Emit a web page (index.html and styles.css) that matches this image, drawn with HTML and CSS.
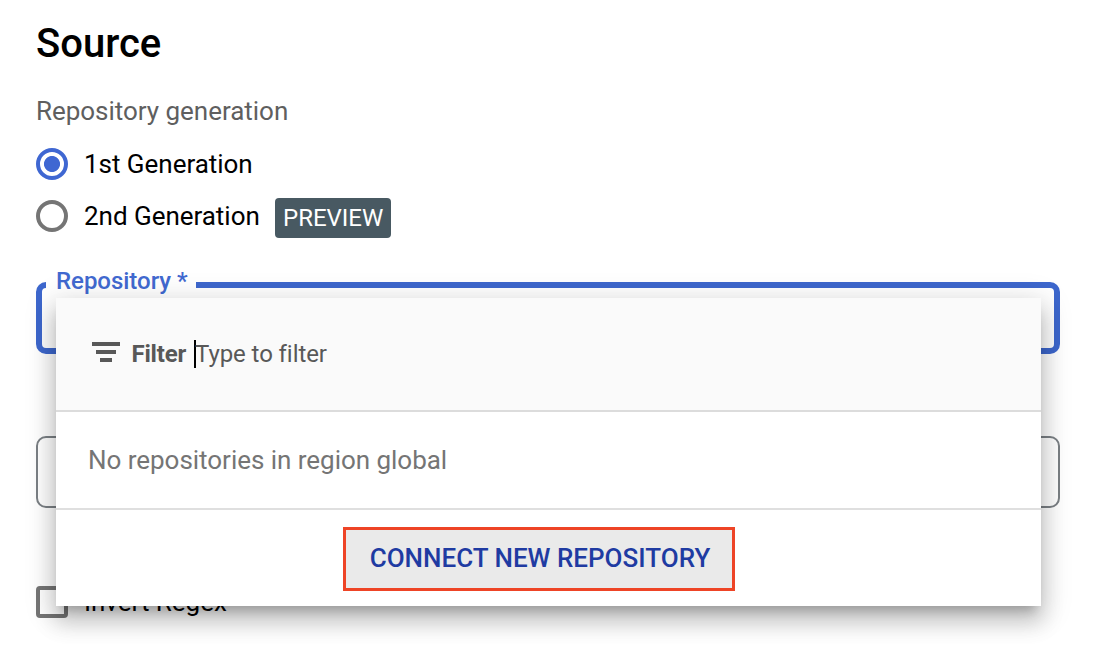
FILE: index.html
```html
<!DOCTYPE html>
<html lang="en">
<head>
<meta charset="utf-8">
<title>Source</title>
<link rel="stylesheet" href="styles.css">
</head>
<body>
<main class="form">
  <h2 class="title">Source</h2>
  <div class="group-label"><span>Repository generation</span></div>
  <div class="option"><span class="radio radio-on"></span><span class="option-text">1st Generation</span></div>
  <div class="option"><span class="radio"></span><span class="option-text">2nd Generation</span><span class="badge"><span>PREVIEW</span></span></div>
  <div class="field field-active">
    <span class="field-label"><span class="field-label-text">Repository *</span></span>
    <div class="menu">
      <div class="filter">
        <svg class="filter-icon" width="28" height="20" viewBox="0 0 28 20"><path d="M0 0h28v4H0zM4 8h20v4H4zM8 16h12v4H8z" fill="#585858"/></svg>
        <b class="filter-name">Filter</b>
        <span class="caret"></span>
        <span class="filter-hint">Type to filter</span>
      </div>
      <div class="empty"><span>No repositories in region global</span></div>
      <div class="actions"><button class="connect"><span>CONNECT NEW REPOSITORY</span></button></div>
    </div>
  </div>
  <div class="field"></div>
  <div class="check"><span class="checkbox"></span><span class="check-text">Invert Regex</span></div>
</main>
</body>
</html>
```
FILE: styles.css
```css
* { box-sizing: border-box; }
body { margin: 0; background: #fff; color: #000; font-family: Roboto, sans-serif; font-size: 26px; line-height: 32px; letter-spacing: -0.03px; overflow: hidden; }
.form { width: 1100px; height: 650px; padding: 20px 40px 0 36px; white-space: nowrap; }
.title { margin: 0; font-size: 40px; line-height: 48px; font-weight: 500; letter-spacing: 0; }
.group-label { margin: 27px 0 21px; color: #5f5f5f; }
.option { display: flex; align-items: center; height: 32px; margin-bottom: 20px; }
.radio { width: 32px; height: 32px; border: 4px solid #757575; border-radius: 50%; margin-right: 16px; }
.radio-on { border-color: #3f67d2; background: radial-gradient(circle, #3f67d2 7.6px, transparent 8.4px); }
.badge { display: flex; align-items: center; justify-content: center; width: 116px; height: 40px; margin: 4px 0 0 auto; border-radius: 4px; background: #485962; color: #fff; font-size: 24px; }
.option .badge { margin-left: 15.4px; }
.field { position: relative; height: 72px; border: 2px solid #7b8085; border-radius: 10px; }
.field-active { margin: 50px 0 82px; border: 6px solid #3d67cd; }
.field-label { position: absolute; left: 4px; top: -21px; width: 150px; height: 28px; padding-left: 10px; background: #fff; color: #4169d0; font-size: 24px; line-height: 28px; font-weight: 500; }
.menu { position: absolute; z-index: 2; left: 14px; top: 10px; width: 985px; height: 308px; background: #fff; box-shadow: 0 10px 10px -6px rgba(0,0,0,.21), 0 16px 20px 2px rgba(0,0,0,.15), 0 6px 28px 4px rgba(0,0,0,.14); }
.filter { display: flex; align-items: center; height: 114px; padding: 0 36px; border-bottom: 2px solid #dcdcdc; background: #fafafa; color: #585858; font-size: 24px; }
.filter-icon { margin: -5px 11.5px 0 0; }
.filter-name { width: 62.5px; font-weight: 700; letter-spacing: -0.2px; }
.caret { width: 2px; height: 28px; background: #000; }
.filter-hint { margin-left: -1px; letter-spacing: -0.08px; }
.empty { display: flex; align-items: center; height: 98px; padding-left: 32px; border-bottom: 2px solid #dfdfdf; color: #757575; }
.actions { display: flex; justify-content: center; height: 96px; padding: 17px 4px 0 0; margin-left: -15px; }
.connect { width: 392px; height: 64px; padding: 0 0 3px 2px; border: 3px solid #ee4426; background: #eaeaea; color: #1f3ba2; font: 500 26px/32px Roboto, sans-serif; }
.check { display: flex; height: 32px; margin-top: 78px; }
.checkbox { width: 32px; height: 32px; margin-right: 16px; border: 4px solid #757575; border-radius: 4px; }
```
